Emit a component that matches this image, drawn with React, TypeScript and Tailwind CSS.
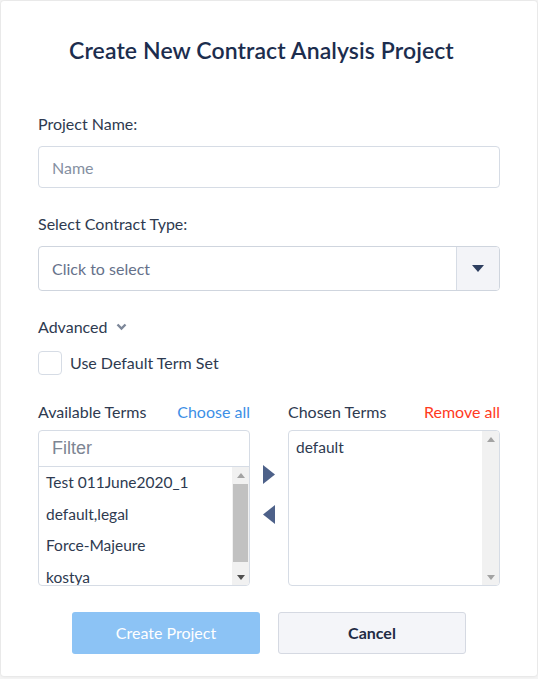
import React from 'react';

const availableTerms = ['Test 011June2020_1', 'default,legal', 'Force-Majeure', 'kostya'];
const chosenTerms = ['default'];

const ScrollBar: React.FC<{ thumb?: boolean }> = ({ thumb }) => (
  <div className="flex w-[17px] flex-col items-center bg-[#f1f1f1]">
    <div className="flex h-[16px] w-full items-center justify-center">
      <svg width="8" height="5" viewBox="0 0 8 5">
        <path d="M0 5 L4 0 L8 5 Z" fill="#a3a3a3" />
      </svg>
    </div>
    <div className="flex w-full flex-1 px-[1px]">
      {thumb && <div className="mt-[1px] h-[78px] w-full bg-[#c1c1c1]" />}
    </div>
    <div className="flex h-[16px] w-full items-center justify-center">
      <svg width="8" height="5" viewBox="0 0 8 5">
        <path d="M0 0 L8 0 L4 5 Z" fill={thumb ? '#505050' : '#a3a3a3'} />
      </svg>
    </div>
  </div>
);

const App: React.FC = () => {
  return (
    <div className="min-h-[679px] bg-[#f4f4f4] p-[1px] font-['Lato',sans-serif] text-[#2e3a50]">
      <div className="h-[675px] rounded-[3px] bg-white shadow-[0_0_3px_rgba(0,0,0,0.12)]">
        <h1 className="pr-[15px] pt-[34px] text-center text-[23px] font-semibold leading-[30px] tracking-[0.1px] text-[#1c2d4e]">
          Create New Contract Analysis Project
        </h1>

        <div className="px-[37px] pt-[48px]">
          <label className="block text-[16px] leading-[22px]">Project Name:</label>
          <input
            placeholder="Name"
            className="mt-[11px] h-[42px] w-full rounded-[4px] border border-[#d6dce5] px-[13px] text-[16px] outline-none placeholder:text-[#8590a2]"
          />

          <label className="mt-[25px] block text-[16px] leading-[22px]">Select Contract Type:</label>
          <div className="mt-[11px] flex h-[45px] w-full overflow-hidden rounded-[4px] border border-[#cfd5de]">
            <div className="flex flex-1 items-center px-[13px] text-[16px] text-[#66718a]">Click to select</div>
            <div className="flex w-[43px] items-center justify-center border-l border-[#d6dce5] bg-[#f3f4f8]">
              <svg width="12" height="7" viewBox="0 0 12 7">
                <path d="M0 0 L12 0 L6 7 Z" fill="#2e3f60" />
              </svg>
            </div>
          </div>

          <div className="mt-[25px] flex items-center gap-[9px] text-[16px] leading-[22px]">
            <span>Advanced</span>
            <svg width="11" height="8" viewBox="0 0 11 8">
              <path d="M1.5 1.5 L5.5 5.5 L9.5 1.5" fill="none" stroke="#7d8799" strokeWidth="2.4" />
            </svg>
          </div>

          <div className="mt-[13px] flex items-center gap-[8px]">
            <div className="h-[24px] w-[24px] rounded-[4px] border border-[#d6dce5]" />
            <span className="text-[16px] leading-[22px]">Use Default Term Set</span>
          </div>

          <div className="mt-[26px] flex">
            <div className="flex w-[212px] flex-col">
              <div className="flex h-[22px] items-center justify-between text-[16px]">
                <span>Available Terms</span>
                <span className="text-[#3d8fe6]">Choose all</span>
              </div>
              <div className="mt-[7px] h-[156px] overflow-hidden rounded-[4px] border border-[#d6dce5]">
                <div className="flex h-[36px] items-center border-b border-[#d6dce5] px-[13px] font-['Liberation_Sans',sans-serif] text-[18px] text-[#7d8593]">
                  Filter
                </div>
                <div className="flex h-[118px]">
                  <div className="flex-1 overflow-hidden pl-[7px] pt-[4px] text-[15.5px] text-[#2e3a50]">
                    {availableTerms.map((t) => (
                      <div key={t} className="h-[31.5px] leading-[22px]">
                        {t}
                      </div>
                    ))}
                  </div>
                  <ScrollBar thumb />
                </div>
              </div>
            </div>

            <div className="flex w-[38px] flex-col items-center pt-[64px]">
              <svg width="12" height="19" viewBox="0 0 12 19">
                <path d="M0 0 L12 9.5 L0 19 Z" fill="#4d6189" />
              </svg>
              <svg className="mt-[21px]" width="12" height="19" viewBox="0 0 12 19">
                <path d="M12 0 L0 9.5 L12 19 Z" fill="#4d6189" />
              </svg>
            </div>

            <div className="flex w-[212px] flex-col">
              <div className="flex h-[22px] items-center justify-between text-[16px]">
                <span>Chosen Terms</span>
                <span className="text-[#ff3a1e]">Remove all</span>
              </div>
              <div className="mt-[7px] flex h-[156px] overflow-hidden rounded-[4px] border border-[#d6dce5]">
                <div className="flex-1 pl-[7px] pt-[5px] text-[15.5px]">
                  {chosenTerms.map((t) => (
                    <div key={t} className="h-[31px] leading-[22px]">
                      {t}
                    </div>
                  ))}
                </div>
                <ScrollBar />
              </div>
            </div>
          </div>
        </div>

        <div className="mt-[26px] flex justify-center gap-[18px]">
          <button className="h-[42px] w-[188px] rounded-[3px] bg-[#8cc3f5] text-[16px] text-white">
            Create Project
          </button>
          <button className="h-[42px] w-[188px] rounded-[3px] border border-[#d5d9e2] bg-[#f4f5f9] text-[16px] font-bold text-[#1f2b44]">
            Cancel
          </button>
        </div>
      </div>
    </div>
  );
};

export default App;
